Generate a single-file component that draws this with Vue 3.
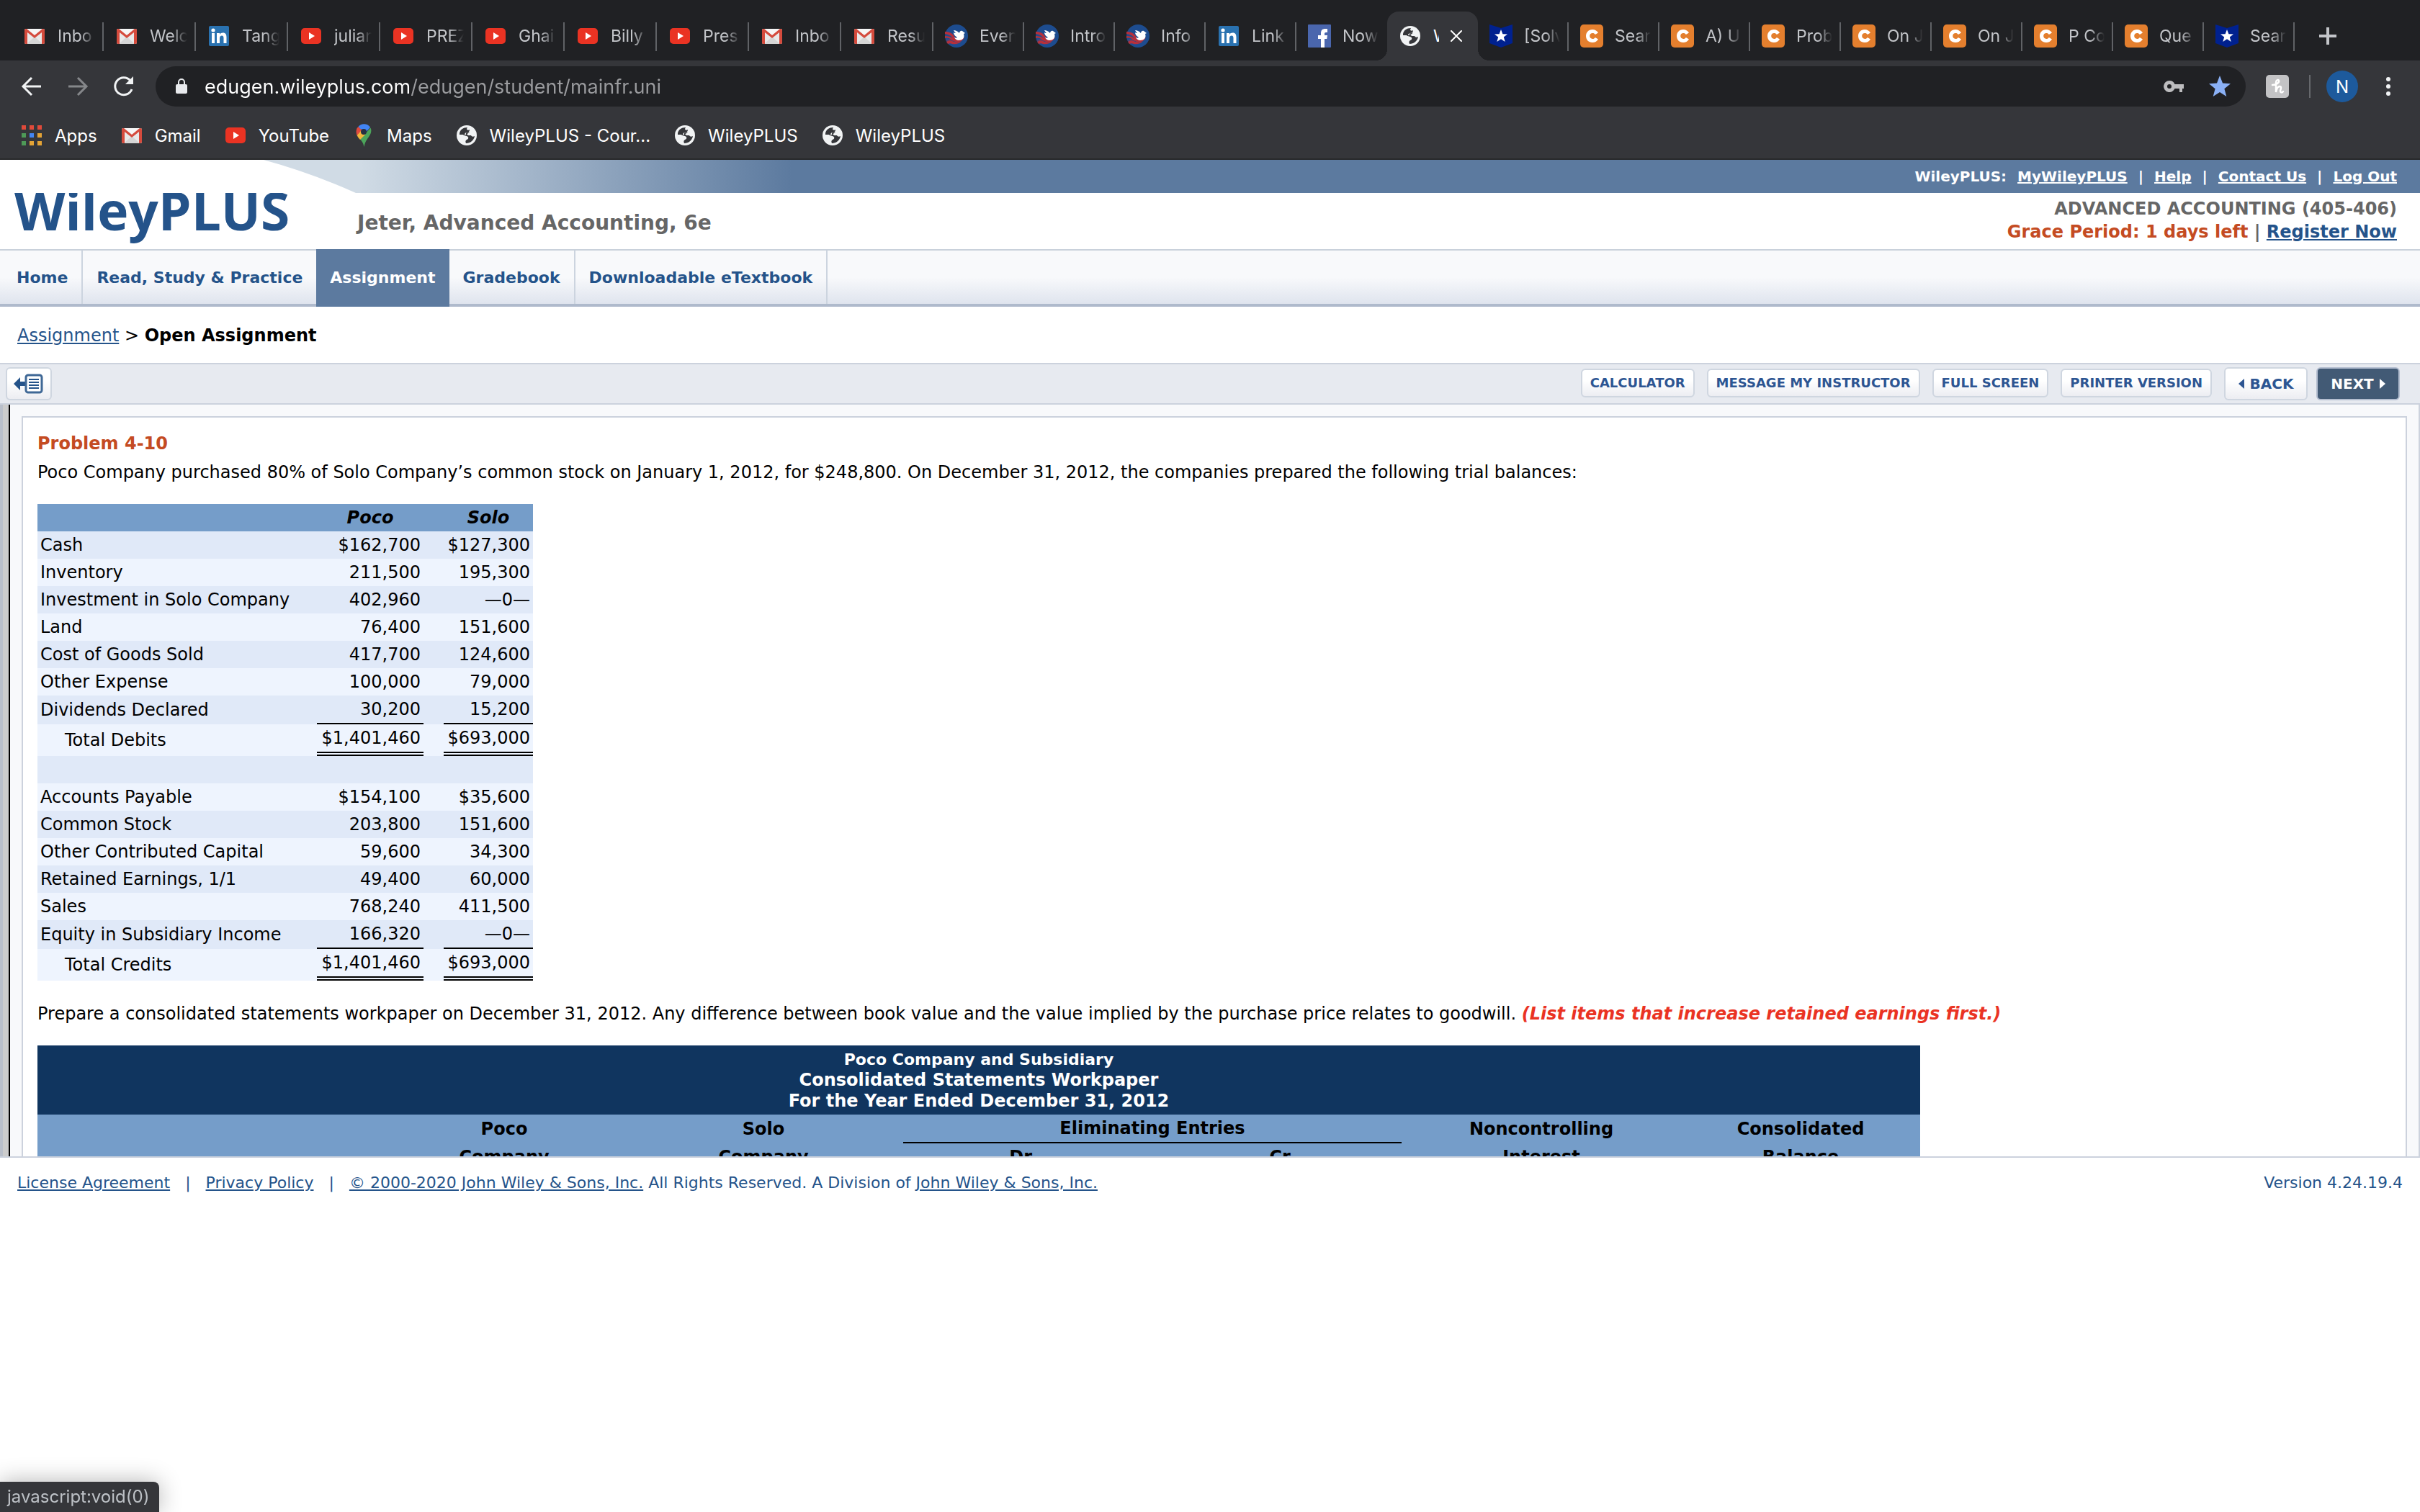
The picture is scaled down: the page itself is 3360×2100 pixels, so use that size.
<template>
    <div class="window">
        <svg class="sprite" aria-hidden="true">
            <symbol id="i-gmail" viewBox="0 0 32 32">
                <rect x="2" y="6" width="28" height="21" rx="2" fill="#e9e9e9" />
                <path d="M5 27l11-10 11 10z" fill="#d5d5d5" />
                <path d="M5 6h22L16 15z" fill="#f6f6f6" />
                <path d="M2 8q0-2 2-2h1l11 9 11-9h1q2 0 2 2v17q0 2-2 2h-2V11L16 19 6 11v16H4q-2 0-2-2z" fill="#d54b3d" />
            </symbol>
            <symbol id="i-linkedin" viewBox="0 0 32 32">
                <rect x="2" y="2" width="28" height="28" rx="2" fill="#2a72b0" />
                <circle cx="8" cy="8" r="2.6" fill="#fff" />
                <path d="M6 12h4v14H6zM13 12h4v2c1-1.600 2.500-2.400 4.500-2.400 4 0 5 2.700 5 6.200V26h-4v-7c0-2-.5-3.600-2.500-3.600S17 17 17 19v7h-4z" fill="#fff" />
            </symbol>
            <symbol id="i-youtube" viewBox="0 0 32 32">
                <rect x="2" y="5" width="28" height="22" rx="5" fill="#ea3323" />
                <path d="M13 11l8 5-8 5z" fill="#fff" />
            </symbol>
            <symbol id="i-eagle" viewBox="0 0 32 32">
                <circle cx="16" cy="16" r="16" fill="#1d4c8f" />
                <path d="M0 10c6 0 11 2 14 8 3 3 9 3 13 0-3 6-8 7-13 6-5-3-8-1-13-2 3-1 5-1 8-1-3-2-5-3-9-2v-3c4 0 8 1 11 3-3-4-6-5-11-6z" fill="#b5303c" />
                <path d="M2 24c3-2 7-2 11 0 4 1 8 0 10-1-3 4-9 5-13 4-2-1-4-1-6 0z" fill="#b5303c" />
                <path d="M12 8c3 0 5 1 8 4 0-2 2-4 4-3l4 3-2 1c2 6-2 9-7 9-3 0-5-2-6-4 2 1 3 1 4 0-3-2-5-4-5-7 1 1 2 1 3 1-1-1-2-2-3-4z" fill="#fff" />
            </symbol>
            <symbol id="i-facebook" viewBox="0 0 32 32">
                <rect width="32" height="32" rx="1" fill="#4a66ad" />
                <path d="M18 32V20h-4v-5h4v-3c0-4 2-6 6-6h3v5h-2c-1.500 0-2 .8-2 2v2h4l-.7 5H23v12z" fill="#fff" />
            </symbol>
            <symbol id="i-globe" viewBox="0 0 32 32">
                <circle cx="16" cy="16" r="14" fill="#f1f3f4" />
                <path d="M6 13C7 8 11 5 17 5l-1 2c0 2 3 2 4 1 0 3-2 4-5 4v3h-4c0 1 3 1 5 2 3 1 3 4 0 5-2 1-2 3-1 5 6 0 11-4 12-10-2 1-4 1-5-1h-4l-2-2c2 0 2-2 4-2l-2-1c-1 1-2 2-3 1l-2 2v1H6z" fill="#35363a" />
            </symbol>
            <symbol id="i-flag" viewBox="0 0 32 32">
                <path d="M0 0l16 5L32 0v26l-16 6L0 26z" fill="#00218f" />
                <path d="M16 7l2.400 6.300 6.600.2-5.200 4.100 1.900 6.400-5.700-3.700-5.700 3.700 1.900-6.400L7 13.500l6.600-.2z" fill="#fff" />
            </symbol>
            <symbol id="i-chegg" viewBox="0 0 32 32">
                <rect width="32" height="32" rx="5" fill="#e47f2e" />
                <path d="M25 11.500c-2-3-4.500-4.500-8-4.500-5.500 0-9 4-9 9s3.500 9 9 9c3.500 0 6-1.500 8-4.500l-4.200-2.600c-1 1.400-2 2-3.600 2-2.400 0-4-1.600-4-3.900s1.600-3.900 4-3.900c1.600 0 2.600.6 3.600 2z" fill="#fff" />
            </symbol>
            <symbol id="i-maps" viewBox="0 0 32 32">
                <path d="M25.500 5.500C28 11 25 16 21 21c-2.500 3.500-3.500 6-4.500 11-1-4.500-2-7-5.500-10.500z" fill="#4ca45b" />
                <path d="M6.500 15.500L19 1l-1 14-7 7c-2-2-3.500-4-4.500-6.500z" fill="#f2b63c" />
                <path d="M8.500 4l5 4.300L6.600 16C5 12 5 7 8.500 4z" fill="#e04a3f" />
                <path d="M8.500 4C12-1 21-1.500 25 5l-5.500 6-8-4z" fill="#4285f4" />
                <circle cx="16" cy="11" r="4" fill="#263043" />
            </symbol>
            <symbol id="i-apps" viewBox="0 0 32 32">
                <path d="M2 2h6v6H2zM13 2h6v6h-6zM24 2h6v6h-6z" fill="#e04a3a" />
                <path d="M2 13h6v6H2zM2 24h6v6H2z" fill="#4e9a57" />
                <path d="M13 13h6v6h-6z" fill="#4285f4" />
                <path d="M24 13h6v6h-6zM13 24h6v6h-6zM24 24h6v6h-6z" fill="#e3a336" />
            </symbol>
        </svg>

        <div class="tab-strip">
            <button
                v-for="(tab, index) in tabs"
                :key="index"
                type="button"
                class="tab"
                :class="{ active: tab.active, plain: tab.plain, wide: index < 10 }"
            >
                <svg class="icon"><use :href="`#i-${tab.icon}`" /></svg>
                <span class="tab-title">{{ tab.title }}</span>
                <svg v-if="tab.active" class="close" viewBox="0 0 16 16"><path d="M1 1l14 14M15 1L1 15" /></svg>
            </button>
            <button type="button" class="new-tab" aria-label="New tab">
                <svg viewBox="0 0 24 24"><path d="M12 0v24M0 12h24" /></svg>
            </button>
        </div>

        <div class="toolbar">
            <button type="button" class="tool" aria-label="Back">
                <svg viewBox="0 0 32 32"><path d="M29 16H4M16 4L4 16l12 12" /></svg>
            </button>
            <button type="button" class="tool dim" aria-label="Forward">
                <svg viewBox="0 0 32 32"><path d="M3 16h25M16 4l12 12-12 12" /></svg>
            </button>
            <button type="button" class="tool" aria-label="Reload">
                <svg viewBox="0 0 32 32">
                    <path d="M27 20A12 12 0 1 1 25 8" />
                    <path class="solid" d="M29 2v11H18z" />
                </svg>
            </button>
            <div class="omnibox">
                <svg class="lock" viewBox="0 0 16 22">
                    <rect y="8" width="16" height="13" rx="2" fill="#e8eaed" />
                    <path d="M4 9V5a4 4 0 0 1 8 0v4" fill="none" stroke="#e8eaed" stroke-width="2" />
                </svg>
                <input v-model="url" class="url" type="text" aria-label="Address" />
                <svg class="key" viewBox="0 0 30 16">
                    <path d="M8 0a8 8 0 1 0 7.500 11H22v5h4v-5h2V5H15.500A8 8 0 0 0 8 0zm0 5a3 3 0 1 1 0 6 3 3 0 0 1 0-6z" fill="#bdbdbf" fill-rule="evenodd" />
                </svg>
                <svg class="star" viewBox="0 0 32 32">
                    <path d="M16 1l4 10.500 11 .7-8.600 7L25.300 30 16 24l-9.300 6 2.900-10.800-8.600-7 11-.7z" fill="#8ab0f5" />
                </svg>
            </div>
            <svg class="honey" viewBox="0 0 32 32">
                <rect width="32" height="32" rx="5" fill="#c3c3c5" />
                <path d="M9 14c5 0 10-3 9-6-1-2-4-1-4 3v13c1-5 2-8 5-8s2 3 1 6c0 3 3 3 4 1" fill="none" stroke="#fff" stroke-width="2.500" stroke-linecap="round" />
            </svg>
            <span class="separator"></span>
            <button type="button" class="avatar">N</button>
            <button type="button" class="more" aria-label="Menu">
                <svg viewBox="0 0 8 28">
                    <circle cx="4" cy="4" r="3" />
                    <circle cx="4" cy="14" r="3" />
                    <circle cx="4" cy="24" r="3" />
                </svg>
            </button>
        </div>

        <div class="bookmarks">
            <a v-for="(mark, index) in bookmarks" :key="index" href="#" class="bookmark">
                <svg class="icon"><use :href="`#i-${mark.icon}`" /></svg>
                <span>{{ mark.title }}</span>
            </a>
        </div>

        <div class="page">
            <header class="header">
                <div class="band">
                    <svg class="curve" viewBox="0 0 500 46" preserveAspectRatio="none">
                        <path d="M0 0H366Q432 18 494 46H0z" fill="#fff" />
                    </svg>
                    <div class="user-links">
                        <span>WileyPLUS:</span>
                        <template v-for="(link, index) in userLinks" :key="link">
                            <span v-if="index">|</span>
                            <a href="#">{{ link }}</a>
                        </template>
                    </div>
                </div>
                <div class="brand">
                    <span class="logo">WileyPLUS</span>
                    <h1 class="course">Jeter, Advanced Accounting, 6e</h1>
                    <div class="class-info">
                        <div>ADVANCED ACCOUNTING (405-406)</div>
                        <div><span class="grace">Grace Period: 1 days left</span> | <a href="#">Register Now</a></div>
                    </div>
                </div>
            </header>

            <nav class="nav">
                <a
                    v-for="item in navItems"
                    :key="item"
                    href="#"
                    :class="{ current: item === 'Assignment', before: item === 'Read, Study & Practice' }"
                >{{ item }}</a>
            </nav>

            <div class="breadcrumb"><a href="#">Assignment</a> &gt; <b>Open Assignment</b></div>

            <div class="actions">
                <button type="button" class="btn outline" aria-label="Show menu">
                    <svg viewBox="0 0 44 30">
                        <path d="M1 15l9-9v6h8v6h-8v6z" fill="#24538a" />
                        <rect x="18" y="3" width="22" height="24" rx="3" fill="#fff" stroke="#3f6896" stroke-width="3" />
                        <path d="M22 9h14M22 13h14M22 17h14M22 21h14" stroke="#24538a" stroke-width="2" />
                    </svg>
                </button>
                <div class="action-group">
                    <button v-for="action in actions" :key="action" type="button" class="btn small">{{ action }}</button>
                    <button type="button" class="btn back">
                        <svg viewBox="0 0 8 14"><path d="M8 0v14L0 7z" /></svg>BACK
                    </button>
                    <button type="button" class="btn next">
                        NEXT<svg viewBox="0 0 8 14"><path d="M0 0v14l8-7z" /></svg>
                    </button>
                </div>
            </div>

            <main class="pane">
                <div class="gutter"></div>
                <section class="problem">
                    <h2>Problem 4-10</h2>
                    <p>Poco Company purchased 80% of Solo Company’s common stock on January 1, 2012, for $248,800. On December 31, 2012, the companies prepared the following trial balances:</p>

                    <table class="balances">
                        <thead>
                            <tr>
                                <th></th>
                                <th>Poco</th>
                                <th>Solo</th>
                            </tr>
                        </thead>
                        <tbody>
                            <tr v-for="(row, index) in rows" :key="index" :class="row.kind">
                                <td class="label">{{ row.label }}</td>
                                <td><span class="amount">{{ row.poco }}</span></td>
                                <td><span class="amount">{{ row.solo }}</span></td>
                            </tr>
                        </tbody>
                    </table>

                    <p class="task">Prepare a consolidated statements workpaper on December 31, 2012. Any difference between book value and the value implied by the purchase price relates to goodwill. <strong class="hint">(List items that increase retained earnings first.)</strong></p>

                    <table class="workpaper">
                        <colgroup>
                            <col class="first" />
                            <col span="6" />
                        </colgroup>
                        <thead>
                            <tr>
                                <th class="title" colspan="7">
                                    <span class="company">Poco Company and Subsidiary</span><br />Consolidated Statements Workpaper<br />For the Year Ended December 31, 2012
                                </th>
                            </tr>
                            <tr>
                                <th></th>
                                <th>Poco</th>
                                <th>Solo</th>
                                <th colspan="2"><span class="underlined">Eliminating Entries</span></th>
                                <th>Noncontrolling</th>
                                <th>Consolidated</th>
                            </tr>
                            <tr>
                                <th></th>
                                <th v-for="name in subHeads" :key="name.id">{{ name.text }}</th>
                            </tr>
                        </thead>
                    </table>
                </section>
            </main>

            <footer class="footer">
                <div class="legal">
                    <a href="#">License Agreement</a>
                    <span class="bar">|</span>
                    <a href="#">Privacy Policy</a>
                    <span class="bar">|</span>
                    <a href="#">© 2000-2020 John Wiley &amp; Sons, Inc.</a> All Rights Reserved. A Division of <a href="#">John Wiley &amp; Sons, Inc.</a>
                </div>
                <div>Version 4.24.19.4</div>
            </footer>
        </div>

        <div class="status">javascript:void(0)</div>
    </div>
</template>

<script setup>
import { ref } from 'vue';

const url = ref('edugen.wileyplus.com/edugen/student/mainfr.uni');

const tabs = [
    { icon: 'gmail', title: 'Inbo' },
    { icon: 'gmail', title: 'Welc' },
    { icon: 'linkedin', title: 'Tang' },
    { icon: 'youtube', title: 'julian' },
    { icon: 'youtube', title: 'PREZ' },
    { icon: 'youtube', title: 'Ghai' },
    { icon: 'youtube', title: 'Billy' },
    { icon: 'youtube', title: 'Pres' },
    { icon: 'gmail', title: 'Inbo' },
    { icon: 'gmail', title: 'Resu' },
    { icon: 'eagle', title: 'Even' },
    { icon: 'eagle', title: 'Intro' },
    { icon: 'eagle', title: 'Info' },
    { icon: 'linkedin', title: 'Link' },
    { icon: 'facebook', title: 'Now', plain: true },
    { icon: 'globe', title: 'W', active: true },
    { icon: 'flag', title: '[Solv' },
    { icon: 'chegg', title: 'Sear' },
    { icon: 'chegg', title: 'A) U' },
    { icon: 'chegg', title: 'Prob' },
    { icon: 'chegg', title: 'On J' },
    { icon: 'chegg', title: 'On J' },
    { icon: 'chegg', title: 'P Co' },
    { icon: 'chegg', title: 'Que' },
    { icon: 'flag', title: 'Sear' }
];

const bookmarks = [
    { icon: 'apps', title: 'Apps' },
    { icon: 'gmail', title: 'Gmail' },
    { icon: 'youtube', title: 'YouTube' },
    { icon: 'maps', title: 'Maps' },
    { icon: 'globe', title: 'WileyPLUS - Cour...' },
    { icon: 'globe', title: 'WileyPLUS' },
    { icon: 'globe', title: 'WileyPLUS' }
];

const userLinks = ['MyWileyPLUS', 'Help', 'Contact Us', 'Log Out'];
const navItems = ['Home', 'Read, Study & Practice', 'Assignment', 'Gradebook', 'Downloadable eTextbook'];
const actions = ['CALCULATOR', 'MESSAGE MY INSTRUCTOR', 'FULL SCREEN', 'PRINTER VERSION'];

const rows = [
    { label: 'Cash', poco: '$162,700', solo: '$127,300' },
    { label: 'Inventory', poco: '211,500', solo: '195,300' },
    { label: 'Investment in Solo Company', poco: '402,960', solo: '—0—' },
    { label: 'Land', poco: '76,400', solo: '151,600' },
    { label: 'Cost of Goods Sold', poco: '417,700', solo: '124,600' },
    { label: 'Other Expense', poco: '100,000', solo: '79,000' },
    { label: 'Dividends Declared', poco: '30,200', solo: '15,200', kind: 'last' },
    { label: 'Total Debits', poco: '$1,401,460', solo: '$693,000', kind: 'total' },
    { label: '', poco: '', solo: '' },
    { label: 'Accounts Payable', poco: '$154,100', solo: '$35,600' },
    { label: 'Common Stock', poco: '203,800', solo: '151,600' },
    { label: 'Other Contributed Capital', poco: '59,600', solo: '34,300' },
    { label: 'Retained Earnings, 1/1', poco: '49,400', solo: '60,000' },
    { label: 'Sales', poco: '768,240', solo: '411,500' },
    { label: 'Equity in Subsidiary Income', poco: '166,320', solo: '—0—', kind: 'last' },
    { label: 'Total Credits', poco: '$1,401,460', solo: '$693,000', kind: 'total' }
];

const subHeads = [
    { id: 1, text: 'Company' },
    { id: 2, text: 'Company' },
    { id: 3, text: 'Dr.' },
    { id: 4, text: 'Cr.' },
    { id: 5, text: 'Interest' },
    { id: 6, text: 'Balance' }
];
</script>

<style>
body {
    background: #fff;
}
</style>

<style scoped>
.window {
    display: flex;
    flex-direction: column;
    height: 100vh;
    overflow: hidden;
    font-family: Inter, Roboto, sans-serif;
}

.sprite {
    position: absolute;
    width: 0;
    height: 0;
}

button {
    border: 0;
    padding: 0;
    background: none;
    font: inherit;
}

svg {
    display: block;
    flex: none;
}

.icon {
    width: 32px;
    height: 32px;
}

/* browser tabs */
.tab-strip {
    display: flex;
    align-items: flex-end;
    height: 84px;
    padding-left: 16px;
    background: #202124;
}

.tab {
    position: relative;
    display: flex;
    align-items: center;
    gap: 16px;
    flex: 0 1 126px;
    width: 126px;
    height: 68px;
    padding: 0 12px 0 16px;
    color: #c3c5c9;
    font-size: 23px;
}

.tab.wide {
    flex-basis: 128px;
}

.tab::after {
    content: '';
    position: absolute;
    right: 0;
    top: 15px;
    width: 2px;
    height: 40px;
    background: #606266;
}

.tab.plain::after {
    display: none;
}

.tab-title {
    flex: 1;
    overflow: hidden;
    text-align: left;
    white-space: nowrap;
    mask-image: linear-gradient(90deg, #000 60%, transparent);
}

.tab.active {
    background: #35363a;
    border-radius: 16px 16px 0 0;
    color: #fff;
}

.tab.active .tab-title {
    flex: 0 0 8px;
    mask-image: none;
}

.tab.active::before,
.tab.active::after {
    content: '';
    position: absolute;
    top: auto;
    bottom: 0;
    width: 16px;
    height: 16px;
    background: radial-gradient(circle at 0 0, transparent 16px, #35363a 16px);
}

.tab.active::before {
    left: -16px;
}

.tab.active::after {
    right: -16px;
    background: radial-gradient(circle at 100% 0, transparent 16px, #35363a 16px);
}

.close {
    width: 16px;
    height: 16px;
    stroke: #fff;
    stroke-width: 2;
    stroke-linecap: round;
}

.new-tab {
    height: 68px;
    padding: 0 34px;
}

.new-tab svg {
    width: 24px;
    height: 24px;
    stroke: #c3c5c9;
    stroke-width: 4;
}

/* address row */
.toolbar {
    display: flex;
    align-items: center;
    padding: 8px 40px 8px 28px;
    background: #35363a;
}

.tool {
    margin-right: 32px;
}

.tool svg {
    width: 32px;
    height: 32px;
    fill: none;
    stroke: #f1f3f4;
    stroke-width: 3;
}

.tool.dim svg {
    stroke: #85878a;
}

.tool .solid {
    fill: #f1f3f4;
    stroke: none;
}

.omnibox {
    display: flex;
    align-items: center;
    flex: 1;
    height: 56px;
    margin: 0 28px 0 -4px;
    padding: 0 20px 0 28px;
    border-radius: 28px;
    background: #202124;
}

.lock {
    width: 16px;
    height: 22px;
}

.url {
    flex: 1;
    margin: 0 24px;
    padding: 0;
    border: 0;
    outline: 0;
    background: linear-gradient(90deg, #fff 284px, #9a9b9e 284px);
    background-clip: text;
    -webkit-text-fill-color: transparent;
    font: 27px Inter, Roboto, sans-serif;
}

.key {
    width: 30px;
    height: 16px;
    margin-right: 32px;
}

.star {
    width: 32px;
    height: 32px;
}

.honey {
    width: 32px;
    height: 32px;
    margin-right: 28px;
}

.separator {
    width: 2px;
    height: 32px;
    margin-right: 22px;
    background: #66686c;
}

.avatar {
    width: 44px;
    height: 44px;
    margin-right: 38px;
    border-radius: 50%;
    background: #1d5a9c;
    color: #fff;
    font-size: 24px;
}

.more svg {
    width: 8px;
    height: 28px;
    fill: #f1f3f4;
}

/* bookmarks row */
.bookmarks {
    display: flex;
    align-items: center;
    gap: 32px;
    height: 64px;
    padding: 0 28px;
    background: #35363a;
    border-bottom: 2px solid #28292b;
}

.bookmark {
    display: flex;
    align-items: center;
    gap: 16px;
    color: #fff;
    font-size: 24px;
    text-decoration: none;
}

/* web page */
.page {
    display: flex;
    flex-direction: column;
    flex: 1;
    min-height: 0;
    font-family: Verdana, 'DejaVu Sans', sans-serif;
    font-size: 24px;
    line-height: 30px;
    color: #000;
}

.page a {
    color: #24538a;
}

.band {
    position: relative;
    display: flex;
    justify-content: flex-end;
    align-items: center;
    height: 46px;
    padding-right: 32px;
    background: linear-gradient(90deg, #d0dbe5 500px, #5c7a9f 1100px);
}

.curve {
    position: absolute;
    left: 0;
    top: 0;
    width: 500px;
    height: 46px;
}

.user-links {
    display: flex;
    gap: 15px;
    color: #fff;
    font-size: 20px;
    font-weight: bold;
}

.page .user-links a {
    color: #fff;
}

.brand {
    display: flex;
    height: 78px;
    padding: 0 32px 0 20px;
}

.logo {
    width: 476px;
    margin-top: -12px;
    color: #24538a;
    font: bold 73px/72px 'Open Sans', sans-serif;
}

.course {
    flex: 1;
    margin: 26px 0 0;
    color: #666;
    font-size: 28px;
    line-height: 32px;
}

.class-info {
    padding-top: 6px;
    color: #666;
    font-size: 24px;
    font-weight: bold;
    line-height: 32px;
    text-align: right;
}

.grace {
    color: #c44b22;
}

.nav {
    display: flex;
    height: 74px;
    padding-left: 4px;
    border-top: 2px solid #c9d1db;
    border-bottom: 4px solid #afbacc;
    background: linear-gradient(#f8f9fb 50%, #dfe4ee);
}

.nav a {
    padding: 0 19px;
    border-right: 2px solid #ccd4df;
    font-size: 22px;
    font-weight: bold;
    line-height: 76px;
    text-decoration: none;
}

.nav a.before,
.nav a.current {
    border-right-color: transparent;
}

.page .nav a.current {
    margin: -2px 0 -4px -2px;
    padding-top: 2px;
    border-right: 0;
    background: #5c7a9f;
    color: #fff;
}

.breadcrumb {
    padding: 25px 24px 23px;
}

.actions {
    display: flex;
    justify-content: space-between;
    align-items: center;
    height: 54px;
    padding: 0 28px 0 8px;
    border-top: 2px solid #ccd2dd;
    border-bottom: 2px solid #ccd2dd;
    background: #e7eaf0;
}

.action-group {
    display: flex;
    align-items: center;
    gap: 17px;
}

.btn {
    display: flex;
    align-items: center;
    justify-content: center;
    gap: 8px;
    height: 46px;
    border: 2px solid #cfd6e0;
    border-radius: 6px;
    background: linear-gradient(#fff 40%, #ecedf2);
    color: #2d5592;
    font-weight: bold;
    font-size: 20px;
}

.btn.small {
    height: 40px;
    margin-bottom: 2px;
    padding: 0 11px;
    font-size: 18px;
}

.btn.outline {
    width: 64px;
}

.btn.outline svg {
    width: 44px;
    height: 30px;
}

.btn.back,
.btn.next {
    width: 116px;
}

.btn.back svg,
.btn.next svg {
    width: 8px;
    height: 14px;
    fill: currentColor;
}

.btn.next {
    margin-left: -5px;
    border-color: #b4bed0;
    background: #425a75;
    color: #fff;
}

.pane {
    display: flex;
    flex: 1 1 0;
    min-height: 0;
    overflow: hidden;
    padding-right: 16px;
    border-right: 2px solid #ccd2dd;
    border-bottom: 2px solid #ccd2dd;
    background: #f8f9fb;
}

.gutter {
    width: 8px;
    border: solid;
    border-width: 0 2px 0 4px;
    border-color: #000 #000 #000 #b9bfca;
    background: #ccc;
}

.problem {
    flex: 1;
    margin: 16px 0 0 16px;
    padding: 21px 20px;
    border: solid #ccd2dd;
    border-width: 2px 2px 0;
    background: #fff;
}

.problem h2 {
    margin: 0;
    color: #c44b22;
    font-size: 24px;
    line-height: 30px;
}

.problem p {
    margin: 9px 0 28px;
    line-height: 32px;
}

.problem .task {
    margin-top: 30px;
}

table {
    table-layout: fixed;
    border-collapse: collapse;
}

th,
td {
    padding: 0 0 0 28px;
    line-height: 38px;
}

.balances {
    width: 688px;
}

.balances th:first-child {
    width: 360px;
    padding: 0;
}

.balances th:nth-child(2) {
    width: 148px;
}

.balances thead tr {
    height: 38px;
    background: #759dc9;
    font-style: italic;
}

.balances tbody tr {
    height: 38px;
    background: #eef4fe;
}

.balances tbody tr:nth-child(odd) {
    background: #e0e9f8;
}

.balances .label {
    padding-left: 4px;
}

.balances .total .label {
    padding-left: 38px;
}

.amount {
    display: block;
    padding: 0 4px;
    text-align: right;
}

.last .amount {
    border-bottom: 2px solid #000;
}

.total .amount {
    border-bottom: 6px double #000;
}

.hint {
    color: #ea3323;
    font-style: italic;
}

.workpaper {
    width: 2614px;
    background: #759dc9;
}

.workpaper .title {
    padding: 5px 0 4px;
    background: #10355f;
    color: #fff;
    line-height: 29px;
}

.company {
    font-size: 22px;
}

.workpaper .first {
    width: 454px;
}

.underlined {
    display: block;
    border-bottom: 2px solid #000;
}

.footer {
    display: flex;
    justify-content: space-between;
    flex: 0 0 455px;
    padding: 20px 24px 17px;
    color: #24538a;
    font-size: 22px;
}

.bar {
    margin: 0 21px;
}

.status {
    position: fixed;
    left: 0;
    bottom: 0;
    padding: 0 14px 0 10px;
    border-radius: 0 8px 0 0;
    background: #35363a;
    box-shadow: 0 0 32px rgba(0, 0, 0, 0.3);
    color: #bdc1c6;
    font-size: 24px;
    line-height: 42px;
}
</style>
